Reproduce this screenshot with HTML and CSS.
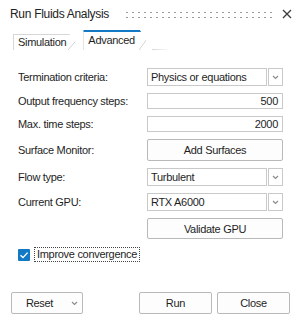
FILE: index.html
```html
<html>
  <head>
    <title>Run Fluids Analysis</title>
    <link rel="stylesheet" href="styles.css">
  </head>
  <body>
    <div class="dialog">
      <div class="titlebar">
        <span class="title">Run Fluids Analysis</span>
        <div class="grip"></div>
        <svg class="close" width="10" height="10" viewBox="0 0 10 10"><path d="M1 1 L9 9 M9 1 L1 9" stroke="#3c3c3c" stroke-width="1.3" fill="none"/></svg>
      </div>

      <div class="tabs">
        <div class="tab">Simulation</div>
        <div class="tab active">Advanced</div>
        <div class="tabline"></div>
      </div>

      <div class="form">
        <div class="row">
          <span class="label">Termination criteria:</span>
          <div class="combo"><div class="combo-value">Physics or equations</div><div class="combo-arrow"><svg width="7" height="5" viewBox="0 0 7 5"><path d="M1 1 L3.5 3.5 L6 1" stroke="#8a8a8a" stroke-width="1.1" fill="none"/></svg></div></div>
        </div>
        <div class="row">
          <span class="label">Output frequency steps:</span>
          <div class="field">500</div>
        </div>
        <div class="row">
          <span class="label">Max. time steps:</span>
          <div class="field">2000</div>
        </div>
        <div class="row">
          <span class="label">Surface Monitor:</span>
          <div class="btn wide">Add Surfaces</div>
        </div>
        <div class="row">
          <span class="label">Flow type:</span>
          <div class="combo"><div class="combo-value">Turbulent</div><div class="combo-arrow"><svg width="7" height="5" viewBox="0 0 7 5"><path d="M1 1 L3.5 3.5 L6 1" stroke="#8a8a8a" stroke-width="1.1" fill="none"/></svg></div></div>
        </div>
        <div class="row">
          <span class="label">Current GPU:</span>
          <div class="combo"><div class="combo-value">RTX A6000</div><div class="combo-arrow"><svg width="7" height="5" viewBox="0 0 7 5"><path d="M1 1 L3.5 3.5 L6 1" stroke="#8a8a8a" stroke-width="1.1" fill="none"/></svg></div></div>
        </div>
        <div class="row">
          <span class="label"></span>
          <div class="btn wide tall">Validate GPU</div>
        </div>
        <div class="check-row">
          <span class="checkbox"><svg width="12" height="12" viewBox="0 0 12 12"><path d="M2.5 6.2 L5 8.6 L9.6 3.6" stroke="#fff" stroke-width="1.4" fill="none"/></svg></span>
          <span class="check-label">Improve convergence</span>
        </div>
      </div>

      <div class="footer">
        <div class="btn reset">Reset <svg width="7" height="5" viewBox="0 0 7 5"><path d="M1 1 L3.5 3.5 L6 1" stroke="#8a8a8a" stroke-width="1.1" fill="none"/></svg></div>
        <div class="spacer"></div>
        <div class="btn action">Run</div>
        <div class="btn action">Close</div>
      </div>
    </div>
  </body>
</html>
```

FILE: styles.css
```css
body {
  margin: 0px;
  padding: 0px;
  background: #ffffff;
}

.dialog {
  width: 300px;
  height: 323px;
  font-family: "Liberation Sans", Arial, sans-serif;
  font-size: 11px;
  letter-spacing: -0.3px;
  color: #1e1e1e;
}

.titlebar {
  display: flex;
  align-items: center;
  height: 28px;
  padding: 0px 0px 0px 10px;
}
.title { font-size: 12px; color: #222; }
.grip {
  flex: 1;
  height: 10px;
  margin: 1px 10px 0px 15px;
  background-image: radial-gradient(circle, #9a9a9a 0.9px, transparent 1.1px);
  background-size: 6px 5px;
}
.close { margin-right: 8px; }

.tabs {
  display: flex;
  align-items: flex-end;
  height: 22px;
  padding-left: 13px;
}
.tab {
  height: 15px;
  padding: 0px 15px 0px 4px;
  line-height: 15px;
  border-left: 1px solid #d6d6d6;
  border-top: 1px solid #d6d6d6;
  clip-path: polygon(0 0, calc(100% - 12px) 0, 100% 100%, 0 100%);
  background: linear-gradient(to bottom right, transparent calc(50% - 0.7px), #cfcfcf 50%, transparent calc(50% + 0.7px)) right top / 13px 100% no-repeat;
}
.tab.active {
  height: 18px;
  line-height: 17px;
  margin-left: 2px;
  padding-right: 17px;
  border-top: 2px solid #1479c4;
}
.tabline {
  width: 18px;
  height: 1px;
  background: linear-gradient(to right, #d6d6d6, #ffffff);
}

.form {
  display: flex;
  flex-direction: column;
  gap: 7px;
  padding: 18px 0px 0px 18px;
}
.row {
  display: flex;
  align-items: center;
}
.label {
  width: 129px;
}

.combo {
  display: flex;
  gap: 1px;
  width: 136px;
  height: 18px;
}
.combo-value {
  flex: 1;
  border: 1px solid #c9c9c9;
  line-height: 16px;
  padding-left: 3px;
}
.combo-arrow {
  width: 13px;
  border: 1px solid #c9c9c9;
  display: flex;
  align-items: center;
  justify-content: center;
}

.field {
  width: 130px;
  height: 14px;
  border: 1px solid #c9c9c9;
  text-align: right;
  line-height: 14px;
  padding-right: 4px;
}

.btn {
  display: flex;
  align-items: center;
  justify-content: center;
  border: 1px solid #b9b9b9;
  border-radius: 2px;
  background: #fdfdfd;
  height: 20px;
}
.btn.wide { width: 134px; }
.btn.tall { height: 19px; }

.check-row {
  display: flex;
  align-items: center;
  margin-top: 1px;
}
.checkbox {
  width: 12px;
  height: 12px;
  background: #1479c4;
  border-radius: 1px;
  display: flex;
}
.check-label {
  margin-left: 4px;
  padding: 0px 2px 0px 2px;
  height: 13px;
  line-height: 13px;
  border: 1px dotted #444;
}

.footer {
  display: flex;
  gap: 5px;
  padding: 30px 10px 0px 11px;
}
.btn.reset {
  width: 72px;
  gap: 18px;
  padding-left: 10px;
  box-sizing: border-box;
  height: 22px;
}
.btn.action {
  width: 71px;
  height: 20px;
}
.spacer { flex: 1; }
```
